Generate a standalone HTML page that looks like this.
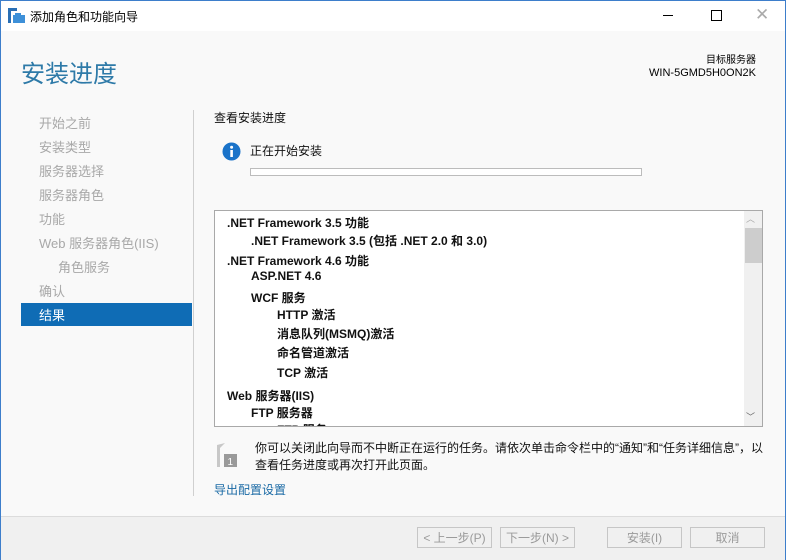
<html><head><style>
body{margin:0;width:786px;height:560px;overflow:hidden;background:#f9f9f9;font-family:"Liberation Sans","Noto Sans CJK SC",sans-serif;position:relative;font-size:12px;color:#1e1e1e}
.a{position:absolute;white-space:nowrap}
.win{position:absolute;left:0;top:0;width:784px;height:558px;border:1px solid #3d7ecb}
.nav{position:absolute;left:39px;font-size:13px;color:#a8a8a8}
.li{position:absolute;font-weight:bold;font-size:12px;color:#111}
.btn{position:absolute;top:527px;height:21px;border:1px solid #c6c6c6;background:#f0f0f0;color:#9a9a9a;font-size:12px;text-align:center;line-height:21px;box-sizing:border-box}
</style></head><body>
<div class="win"></div>
<div class="a" style="left:1px;top:1px;width:784px;height:30px;background:#fff"></div>
<svg class="a" style="left:8px;top:8px" width="18" height="16"><rect x="0" y="0" width="3" height="15" fill="#2a6fb5"/><rect x="0" y="0" width="9" height="3" fill="#2a6fb5"/><rect x="5" y="7" width="12" height="8" fill="#3e90d8"/><rect x="7" y="5" width="6" height="3" fill="#3e90d8"/></svg>
<div class="a" style="left:30px;top:8px;font-size:12px;color:#000">添加角色和功能向导</div>
<div class="a" style="left:663px;top:15px;width:10px;height:1px;background:#000"></div>
<div class="a" style="left:711px;top:10px;width:9px;height:9px;border:1px solid #000"></div>
<div class="a" style="left:755px;top:5px;font-size:17px;color:#aaa">✕</div>
<div class="a" style="left:21px;top:54px;font-size:24px;color:#2e7aa8">安装进度</div>
<div class="a" style="right:30px;top:54px;font-size:10px;color:#000;text-align:right;line-height:13px">目标服务器<br><span style="font-size:11px">WIN-5GMD5H0ON2K</span></div>
<div class="nav" style="top:113px">开始之前</div>
<div class="nav" style="top:137px">安装类型</div>
<div class="nav" style="top:161px">服务器选择</div>
<div class="nav" style="top:185px">服务器角色</div>
<div class="nav" style="top:209px">功能</div>
<div class="nav" style="top:233px">Web 服务器角色(IIS)</div>
<div class="nav" style="top:257px;left:58px">角色服务</div>
<div class="nav" style="top:281px">确认</div>
<div class="a" style="left:21px;top:303px;width:171px;height:23px;background:#0f6cb5"></div>
<div class="nav" style="top:305px;color:#fff">结果</div>
<div class="a" style="left:193px;top:110px;width:1px;height:386px;background:#d0d0d0"></div>
<div class="a" style="left:214px;top:109px;color:#111">查看安装进度</div>
<svg class="a" style="left:222px;top:142px" width="19" height="19"><circle cx="9.5" cy="9.5" r="9" fill="#1a73c9"/><rect x="8.3" y="8" width="2.6" height="7" fill="#fff"/><circle cx="9.6" cy="5.3" r="1.5" fill="#fff"/></svg>
<div class="a" style="left:250px;top:142px;color:#111">正在开始安装</div>
<div class="a" style="left:250px;top:168px;width:390px;height:6px;border:1px solid #bcbcbc;background:#fff"></div>
<div class="a" style="left:214px;top:210px;width:547px;height:215px;border:1px solid #a9a9a9;background:#fff;overflow:hidden">
<div class="a" style="left:529px;top:0;width:18px;height:215px;background:#f0f0f0"></div>
<div class="a" style="left:531px;top:1px;font-size:9px;color:#aaa">︿</div>
<div class="a" style="left:530px;top:17px;width:17px;height:35px;background:#cdcdcd"></div>
<div class="a" style="left:531px;top:199px;font-size:9px;color:#666">﹀</div>
<div class="li" style="left:12px;top:3px">.NET Framework 3.5 功能</div>
<div class="li" style="left:36px;top:21px">.NET Framework 3.5 (包括 .NET 2.0 和 3.0)</div>
<div class="li" style="left:12px;top:41px">.NET Framework 4.6 功能</div>
<div class="li" style="left:36px;top:58px">ASP.NET 4.6</div>
<div class="li" style="left:36px;top:78px">WCF 服务</div>
<div class="li" style="left:62px;top:95px">HTTP 激活</div>
<div class="li" style="left:62px;top:114px">消息队列(MSMQ)激活</div>
<div class="li" style="left:62px;top:133px">命名管道激活</div>
<div class="li" style="left:62px;top:153px">TCP 激活</div>
<div class="li" style="left:12px;top:176px">Web 服务器(IIS)</div>
<div class="li" style="left:36px;top:193px">FTP 服务器</div>
<div class="li" style="left:62px;top:210px">FTP 服务</div>
</div>
<svg class="a" style="left:215px;top:443px" width="26" height="26"><path d="M2 2 L10 0 L2 8Z" fill="#c8c8c8"/><rect x="2" y="2" width="3" height="22" fill="#c8c8c8"/><rect x="9" y="11" width="13" height="13" fill="#9a9a9a"/><text x="12.5" y="22" font-size="10" fill="#fff" font-family="Liberation Sans">1</text></svg>
<div class="a" style="left:255px;top:440px;color:#111;line-height:17px">你可以关闭此向导而不中断正在运行的任务。请依次单击命令栏中的“通知”和“任务详细信息”，以<br>查看任务进度或再次打开此页面。</div>
<div class="a" style="left:214px;top:481px;color:#1a6aa5">导出配置设置</div>
<div class="a" style="left:1px;top:516px;width:784px;height:43px;background:#f0f0f0;border-top:1px solid #dcdcdc"></div>
<div class="btn" style="left:417px;width:75px">&lt; 上一步(P)</div>
<div class="btn" style="left:500px;width:75px">下一步(N) &gt;</div>
<div class="btn" style="left:607px;width:75px">安装(I)</div>
<div class="btn" style="left:690px;width:75px">取消</div>
</body></html>
